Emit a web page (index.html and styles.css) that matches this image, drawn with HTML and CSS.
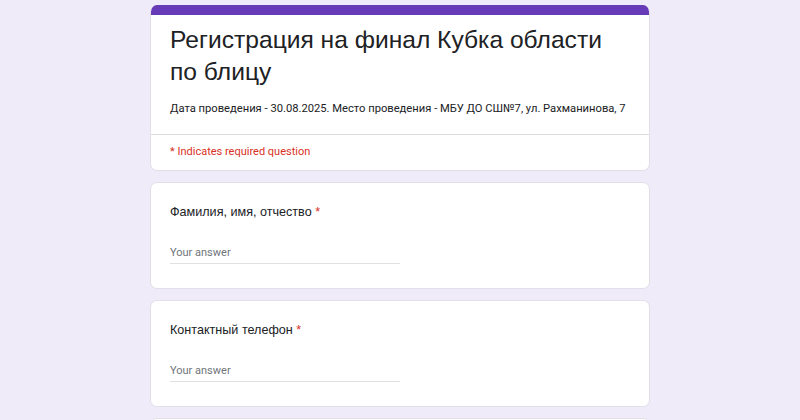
FILE: index.html
```html
<!DOCTYPE html>
<html lang="ru">
<head>
<meta charset="utf-8">
<title>Регистрация на финал Кубка области по блицу</title>
<link rel="stylesheet" href="styles.css">
</head>
<body>
<main class="form">
  <section class="card header-card">
    <div class="accent"></div>
    <div class="header-body">
      <h1 class="title">Регистрация на финал Кубка области по блицу</h1>
      <p class="desc">Дата проведения - 30.08.2025. Место проведения - МБУ ДО СШ№7, ул. Рахманинова, 7</p>
    </div>
    <div class="required-note">* Indicates required question</div>
  </section>

  <section class="card question">
    <div class="q-title">Фамилия, имя, отчество <span class="req">*</span></div>
    <div class="answer">Your answer</div>
  </section>

  <section class="card question">
    <div class="q-title">Контактный телефон <span class="req">*</span></div>
    <div class="answer">Your answer</div>
  </section>

  <section class="card question-stub"></section>
</main>
</body>
</html>
```

FILE: styles.css
```css
html, body {
  margin: 0;
  padding: 0;
}
body {
  background: #f0ebf8;
  font-family: Roboto, "Noto Sans", Arial, sans-serif;
  color: #202124;
  height: 420px;
  overflow: hidden;
}
.form {
  width: 500px;
  margin: 5px auto 0;
  display: flex;
  flex-direction: column;
  gap: 11px;
}
.card {
  background: #fff;
  border: 1px solid #e3dfe9;
  border-radius: 7px;
  box-sizing: border-box;
}
.header-card {
  overflow: hidden;
  border-top: none;
}
.accent {
  height: 10px;
  background: #673ab7;
}
.header-body {
  padding: 9px 16px 17px 19px;
  border-bottom: 1px solid #dadce0;
}
.title {
  margin: 0;
  padding-right: 8px;
  font-family: "Liberation Sans", Arial, sans-serif;
  font-weight: 400;
  font-size: 24.6px;
  line-height: 32px;
  color: #202124;
}
.desc {
  margin: 13px 0 0;
  font-size: 11.2px;
  line-height: 16px;
  color: #202124;
  white-space: nowrap;
}
.required-note {
  padding: 9px 19px 10px;
  font-size: 11px;
  line-height: 16px;
  color: #d93025;
}
.question {
  padding: 20px 19px 24px;
}
.q-title {
  font-family: "Liberation Sans", Arial, sans-serif;
  font-size: 12.6px;
  line-height: 18px;
  color: #202124;
}
.req {
  color: #d93025;
}
.answer {
  margin-top: 24px;
  width: 230px;
  font-size: 11px;
  line-height: 16px;
  color: #70757a;
  padding-bottom: 2px;
  border-bottom: 1px solid #e0e0e0;
}
.question-stub {
  height: 60px;
}
```
